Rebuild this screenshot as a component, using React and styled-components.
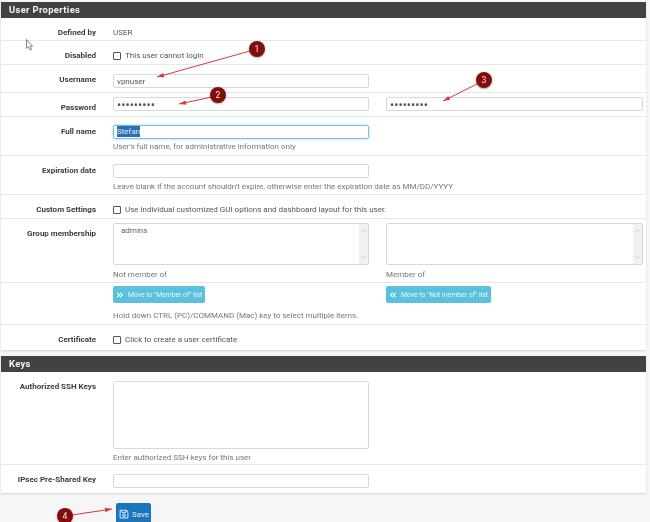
import React from "react";
import styled, { createGlobalStyle } from "styled-components";
import { FaAngleDoubleLeft, FaAngleDoubleRight, FaRegSave } from "react-icons/fa";
import { ChevronUp, ChevronDown } from "lucide-react";

const Global = createGlobalStyle`
  html, body { margin: 0; padding: 0; background: #f6f6f6; }
  body { font-family: Roboto, "Liberation Sans", sans-serif; font-size: 8px; color: #555; }
  * { box-sizing: border-box; }
`;
const Page = styled.div`
  position: relative; width: 650px; height: 522px; overflow: hidden; padding: 2px 4px 0 1px; filter: blur(.25px);
`;
const Panel = styled.section`
  background: #fff; margin-bottom: ${p => p.$mb}px;
  box-shadow: 0 1px 2px rgba(0,0,0,.14);
`;
const Head = styled.h2`
  margin: 0; height: 16px; background: #424242; color: #f4f4f4; font-size: 9.4px; font-weight: 700;
  letter-spacing: .35px; line-height: 16px; padding-left: 8px;
`;
const Row = styled.div`
  display: grid; grid-template-columns: 95px 256px 257px; column-gap: 17px; align-content: start;
  height: ${p => p.$h}px; padding-top: ${p => p.$pt}px; border-bottom: 1px solid ${p => p.$last ? "transparent" : "#e8e8e8"};
`;
const Label = styled.div`
  text-align: right; font-weight: 700; color: #3c3c3c; line-height: 11px; margin-top: ${p => p.$mt || 0}px; white-space: nowrap;
`;
const Cell = styled.div`
  display: flex; flex-direction: column; min-width: 0; white-space: nowrap; line-height: 11px; margin-top: ${p => p.$mt || 0}px;
`;
const Input = styled.input`
  display: block; width: 100%; height: 14px; border: 1px solid #d8d8d8; border-radius: 2px; background: #fff; padding: 0 3px;
  font: ${p => p.type === "password" ? "12.5px" : "8px"} Roboto, sans-serif; color: #555; outline: none;
`;
const Focused = styled.div`
  height: 14px; border: 1px solid #7cc0e4; border-radius: 2px; padding: 0 3px; line-height: 12px; color: #333;
  box-shadow: 0 0 3px rgba(102,175,233,.65);
`;
const Selected = styled.span`background: #2f6db3; color: #dfe9f5; display: inline-block; height: 11px; line-height: 11px;`;
const Check = styled.label`display: flex; align-items: center; gap: 4px; color: #555;`;
const Box = styled.span`width: 8px; height: 8px; border: 1px solid #555; border-radius: 1px; background: #fff; flex: none;`;
const Help = styled.div`color: #777; margin-top: ${p => p.$mt}px; line-height: 11px; font-size: 8px;`;
const ListBox = styled.div`
  position: relative; height: 42px; border: 1px solid #d8d8d8; border-radius: 2px; background: #fff; padding: 1px 7px; color: #666;
`;
const Scroll = styled.div`
  position: absolute; right: 0; top: 0; bottom: 0; width: 9px; background: #f1f1f1; display: flex; flex-direction: column;
  justify-content: space-between; align-items: center; color: #999; padding: 3px 0;
`;
const MoveBtn = styled.button`
  display: flex; align-items: center; gap: 4px; height: 17px; width: ${p => p.$w}px; border: 0; border-radius: 2px; background: #5bc0de; color: #e8f6fb;
  font: 6.8px Roboto, sans-serif; padding: 0 0 0 3px; white-space: nowrap;
  svg { flex: none; }
`;
const Area = styled.div`
  position: relative; height: 68px; border: 1px solid #d8d8d8; border-radius: 2px; background: #fff;
`;
const Footer = styled.div`padding-left: 115px;`;
const Save = styled.button`
  display: flex; align-items: center; gap: 3px; width: 35px; height: 22px; border: 0; border-radius: 2px; background: #1b75bc; color: #e8f1f9;
  font: 8px Roboto, sans-serif; padding: 0 0 0 3px;
  svg { flex: none; }
`;
const Overlay = styled.svg`position: absolute; left: 0; top: 0; pointer-events: none;`;
const Badge = styled.div`
  position: absolute; left: ${p => p.$x - 8}px; top: ${p => p.$y - 8}px; width: 16px; height: 16px; border-radius: 50%;
  background: #860b0b; color: #eed; font-size: 8.6px; line-height: 16px; text-align: center; box-shadow: 0 1px 2px rgba(0,0,0,.35);
`;

const Arrow = ({ a, b }) => {
  const ang = Math.atan2(b[1] - a[1], b[0] - a[0]);
  const p = (d, o) => `${b[0] - d * Math.cos(ang) - o * Math.sin(ang)},${b[1] - d * Math.sin(ang) + o * Math.cos(ang)}`;
  return (
    <g>
      <line x1={a[0]} y1={a[1]} x2={b[0]} y2={b[1]} stroke="#d8383c" strokeWidth="1" />
      <polygon points={`${b[0]},${b[1]} ${p(7, 2.2)} ${p(7, -2.2)}`} fill="#d8383c" />
    </g>
  );
};

const ScrollBar = () => (
  <Scroll>
    <ChevronUp size={7} strokeWidth={1.5} />
    <ChevronDown size={7} strokeWidth={1.5} />
  </Scroll>
);

export default function App() {
  return (
    <Page>
      <Global />
      <Panel $mb={6}>
        <Head>User Properties</Head>
        <Row $h={23} $pt={8}><Label $mt={1}>Defined by</Label><Cell $mt={1}>USER</Cell></Row>
        <Row $h={24} $pt={8}><Label $mt={1}>Disabled</Label><Cell $mt={1}><Check><Box />This user cannot login</Check></Cell></Row>
        <Row $h={28} $pt={9}><Label>Username</Label><Cell><Input readOnly value="vpnuser" /></Cell></Row>
        <Row $h={24} $pt={4}>
          <Label $mt={5}>Password</Label>
          <Cell><Input readOnly type="password" value="123456789" /></Cell>
          <Cell><Input readOnly type="password" value="123456789" /></Cell>
        </Row>
        <Row $h={39} $pt={8}>
          <Label $mt={1}>Full name</Label>
          <Cell><Focused><Selected>Stefan</Selected></Focused><Help $mt={2}>User's full name, for administrative information only</Help></Cell>
        </Row>
        <Row $h={39} $pt={8}>
          <Label $mt={1}>Expiration date</Label>
          <Cell>
            <Input readOnly value="" />
            <Help $mt={3}>Leave blank if the account shouldn't expire, otherwise enter the expiration date as MM/DD/YYYY</Help>
          </Cell>
        </Row>
        <Row $h={24} $pt={9}><Label>Custom Settings</Label><Cell><Check><Box />Use individual customized GUI options and dashboard layout for this user.</Check></Cell></Row>
        <Row $h={64} $pt={4}>
          <Label $mt={5}>Group membership</Label>
          <Cell><ListBox>admins<ScrollBar /></ListBox><Help $mt={4}>Not member of</Help></Cell>
          <Cell><ListBox><ScrollBar /></ListBox><Help $mt={4}>Member of</Help></Cell>
        </Row>
        <Row $h={42} $pt={3}>
          <span />
          <Cell>
            <MoveBtn $w={92}><FaAngleDoubleRight size={8} />Move to "Member of" list</MoveBtn>
            <Help $mt={7}>Hold down CTRL (PC)/COMMAND (Mac) key to select multiple items.</Help>
          </Cell>
          <Cell><MoveBtn $w={105}><FaAngleDoubleLeft size={8} />Move to "Not member of" list</MoveBtn></Cell>
        </Row>
        <Row $h={25} $pt={9} $last><Label>Certificate</Label><Cell><Check><Box />Click to create a user certificate</Check></Cell></Row>
      </Panel>
      <Panel $mb={10}>
        <Head>Keys</Head>
        <Row $h={93} $pt={9}>
          <Label>Authorized SSH Keys</Label>
          <Cell><Area /><Help $mt={3}>Enter authorized SSH keys for this user</Help></Cell>
        </Row>
        <Row $h={28} $pt={9} $last><Label>IPsec Pre-Shared Key</Label><Cell><Input readOnly value="" /></Cell></Row>
      </Panel>
      <Footer><Save><FaRegSave size={10} />Save</Save></Footer>

      <Overlay width="650" height="522" viewBox="0 0 650 522">
        <Arrow a={[250, 51]} b={[157, 77]} />
        <Arrow a={[212, 97]} b={[179, 104]} />
        <Arrow a={[477, 84]} b={[443, 101]} />
        <Arrow a={[72, 515]} b={[112, 509]} />
        <path d="M26.5 39.5v9l2-1.8 1.6 3.4 1.5-.7-1.6-3.2h2.6z" fill="#fff" stroke="#555" strokeWidth=".7" />
      </Overlay>
      <Badge $x={257} $y={49}>1</Badge>
      <Badge $x={218} $y={95}>2</Badge>
      <Badge $x={484} $y={80}>3</Badge>
      <Badge $x={65} $y={516}>4</Badge>
    </Page>
  );
}
